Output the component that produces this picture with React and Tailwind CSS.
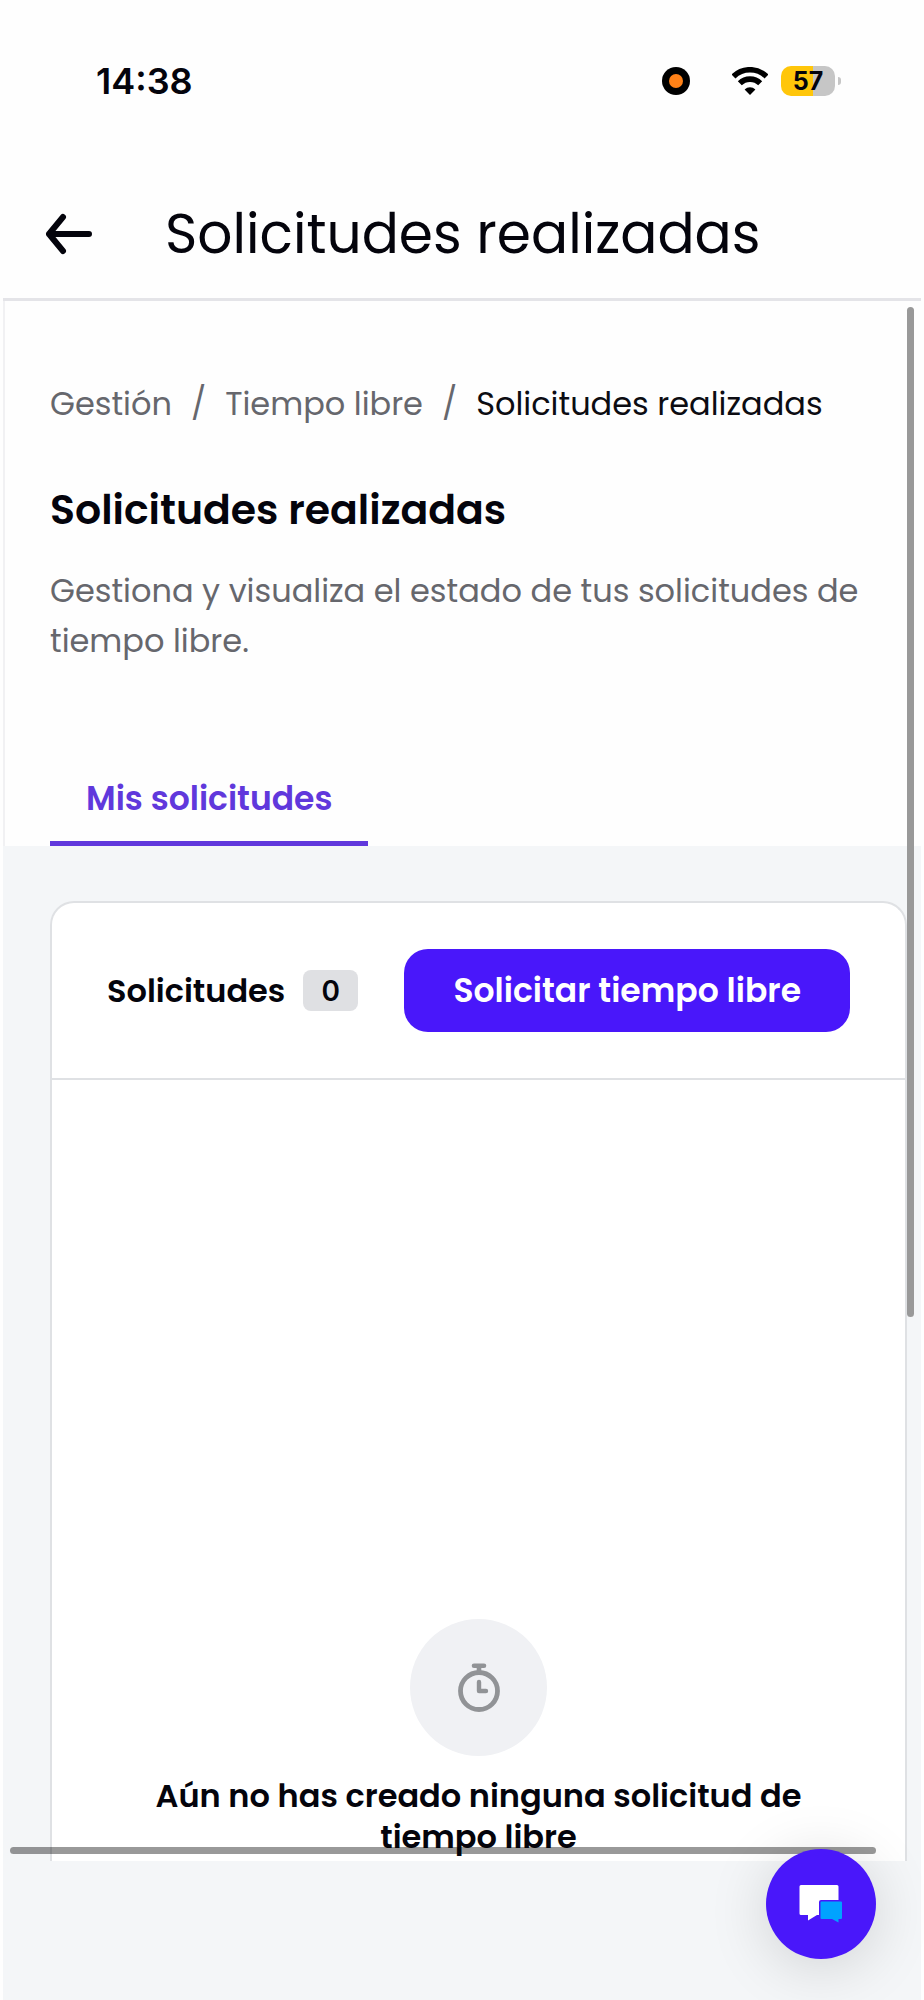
import React from "react";

const crumbs = ["Gestión", "Tiempo libre"];

const StatusBar = () => {
  return (
    <div className="flex h-[163px] items-start justify-between pt-[59px] pr-[80px] pl-[93px] font-[Inter,sans-serif]">
      <span className="text-[36px] leading-[44px] font-semibold">14:38</span>
      <div className="flex h-[44px] items-center">
        <span className="mr-[42px] flex size-7 items-center justify-center rounded-full bg-black">
          <span className="size-[14px] rounded-full bg-[#ff8117]" />
        </span>
        <svg className="mr-[13px] h-[28px] w-[36px]" viewBox="0 0 36 28" fill="none" aria-hidden="true">
          <path d="M1.500 9.500A23.500 23.500 0 0 1 34.500 9.500" stroke="#000" strokeWidth="5.600" />
          <path d="M7.800 16.300A14.500 14.500 0 0 1 28.200 16.300" stroke="#000" strokeWidth="5.600" />
          <path d="M12.600 22.400A8 8 0 0 1 23.400 22.400L18 28Z" fill="#000" />
        </svg>
        <span className="flex h-[30px] w-[54px] items-center justify-center rounded-[10px] bg-linear-to-r from-[#ffc60a] from-60% to-[#c6c6c6] to-60% text-[25px] leading-[30px] font-bold">
          57
        </span>
        <span className="ml-[3px] h-2 w-[3px] rounded-r-full bg-[#c6c6c6]" />
      </div>
    </div>
  );
};

const BackArrow = () => (
  <svg className="h-[42px] w-[48px]" viewBox="0 0 48 42" fill="none" stroke="currentColor" strokeWidth="6" strokeLinecap="round" strokeLinejoin="round">
    <path d="M44 21H4M18 4L4 21L18 38" />
  </svg>
);

const Stopwatch = () => (
  <svg className="h-[50px] w-[44px]" viewBox="0 0 44 50" fill="none" stroke="#919396" strokeLinecap="round" strokeLinejoin="round" aria-hidden="true">
    <circle cx="22" cy="28" r="18.500" strokeWidth="4.800" />
    <path d="M17 2.800H27M22 4V9" strokeWidth="4.600" />
    <path d="M22 19V28H29" strokeWidth="4.400" />
  </svg>
);

const ChatIcon = () => (
  <svg className="h-[40px] w-[44px]" viewBox="0 0 44 40" aria-hidden="true">
    <path d="M2 1H38Q39.500 1 39.500 2.500V16H22Q20 16 20 18V31H18L9 36.500V31H2Q.5 31 .5 29.500V2.500Q.5 1 2 1Z" fill="#fff" />
    <path d="M22.500 17.500H42Q43 17.500 43 18.500V34Q43 35 42 35H39.500V38.500L33 35H22.500Q21.500 35 21.500 34V18.500Q21.500 17.500 22.500 17.500Z" fill="#00a3ff" />
  </svg>
);

const App = () => {
  return (
    <div className="relative flex min-h-screen flex-col bg-[#fefefe] px-[3px] font-[Poppins,Inter,sans-serif] text-[#04040c]">
      <header className="border-b-3 border-[#e4e4e8]">
        <StatusBar />
        <div className="flex h-[135px] items-center gap-[72px] pt-[6px] pl-[42px]">
          <button type="button" aria-label="Volver">
            <BackArrow />
          </button>
          <h1 className="text-[55px] leading-[80px] font-normal">Solicitudes realizadas</h1>
        </div>
      </header>

      <div className="flex grow flex-col bg-[#f4f6f8]">
        <main className="relative">
          <section className="border-l-2 border-[#f1f1f3] bg-[#fefefe] pr-[42px] pl-[45px]">
            <nav aria-label="Ruta" className="pt-[78px]">
              <ol className="flex text-[32px] leading-[50px] text-[#66676d]">
                {crumbs.map((crumb) => (
                  <li key={crumb} className="flex">
                    <a href="#">{crumb}</a>
                    <span className="px-[19px]">/</span>
                  </li>
                ))}
                <li aria-current="page" className="text-[#0c0c12]">
                  Solicitudes realizadas
                </li>
              </ol>
            </nav>
            <h2 className="mt-[51px] text-[41px] leading-[60px] font-semibold">Solicitudes realizadas</h2>
            <p className="mt-[26px] text-[32px] leading-[50px] text-[#66676d]">
              Gestiona y visualiza el estado de tus solicitudes de tiempo libre.
            </p>
            <div role="tablist" className="mt-[91px] flex">
              <button
                type="button"
                role="tab"
                aria-selected="true"
                className="border-b-5 border-[#6038dc] px-[36px] pt-[17px] pb-[17px] text-[33px] leading-[50px] font-semibold text-[#6038dc]"
              >
                Mis solicitudes
              </button>
            </div>
          </section>

          <section className="pt-[55px] pr-[14px] pl-[47px]">
            <div className="rounded-t-[24px] border-2 border-b-0 border-[#dfe1e4] bg-white">
              <div className="flex items-center justify-between border-b-2 border-[#dfe1e4] px-[55px] py-[46px]">
                <div className="flex items-center gap-[18px]">
                  <h3 className="text-[32px] leading-[50px] font-semibold">Solicitudes</h3>
                  <span className="flex h-[41px] w-[55px] items-center justify-center rounded-lg bg-[#dfe0e3] font-[Inter,sans-serif] text-[28px] leading-[40px] font-semibold">
                    0
                  </span>
                </div>
                <button
                  type="button"
                  className="h-[83px] rounded-[24px] bg-[#4917fa] px-[49px] text-[33px] leading-[50px] font-semibold whitespace-nowrap text-white"
                >
                  Solicitar tiempo libre
                </button>
              </div>
              <div className="flex flex-col items-center px-[90px] pt-[539px]">
                <span className="flex size-[137px] items-center justify-center rounded-full bg-[#f0f1f4]">
                  <Stopwatch />
                </span>
                <p className="mt-[19px] pb-[4px] text-center text-[32px] leading-[41px] font-semibold">
                  Aún no has creado ninguna solicitud de tiempo libre
                </p>
              </div>
            </div>
          </section>

          <span className="absolute top-[6px] right-[7px] h-[1010px] w-[7px] rounded-full bg-[#999]" />
          <span className="absolute right-[45px] bottom-[7px] left-[7px] h-[7px] rounded-full bg-black/40" />
        </main>
      </div>

      <button
        type="button"
        aria-label="Abrir chat"
        className="absolute right-[48px] bottom-[41px] flex size-[110px] items-center justify-center rounded-full bg-[#4917fa] shadow-[0_8px_60px_rgba(0,0,0,0.15)]"
      >
        <ChatIcon />
      </button>
    </div>
  );
};

export default App;
